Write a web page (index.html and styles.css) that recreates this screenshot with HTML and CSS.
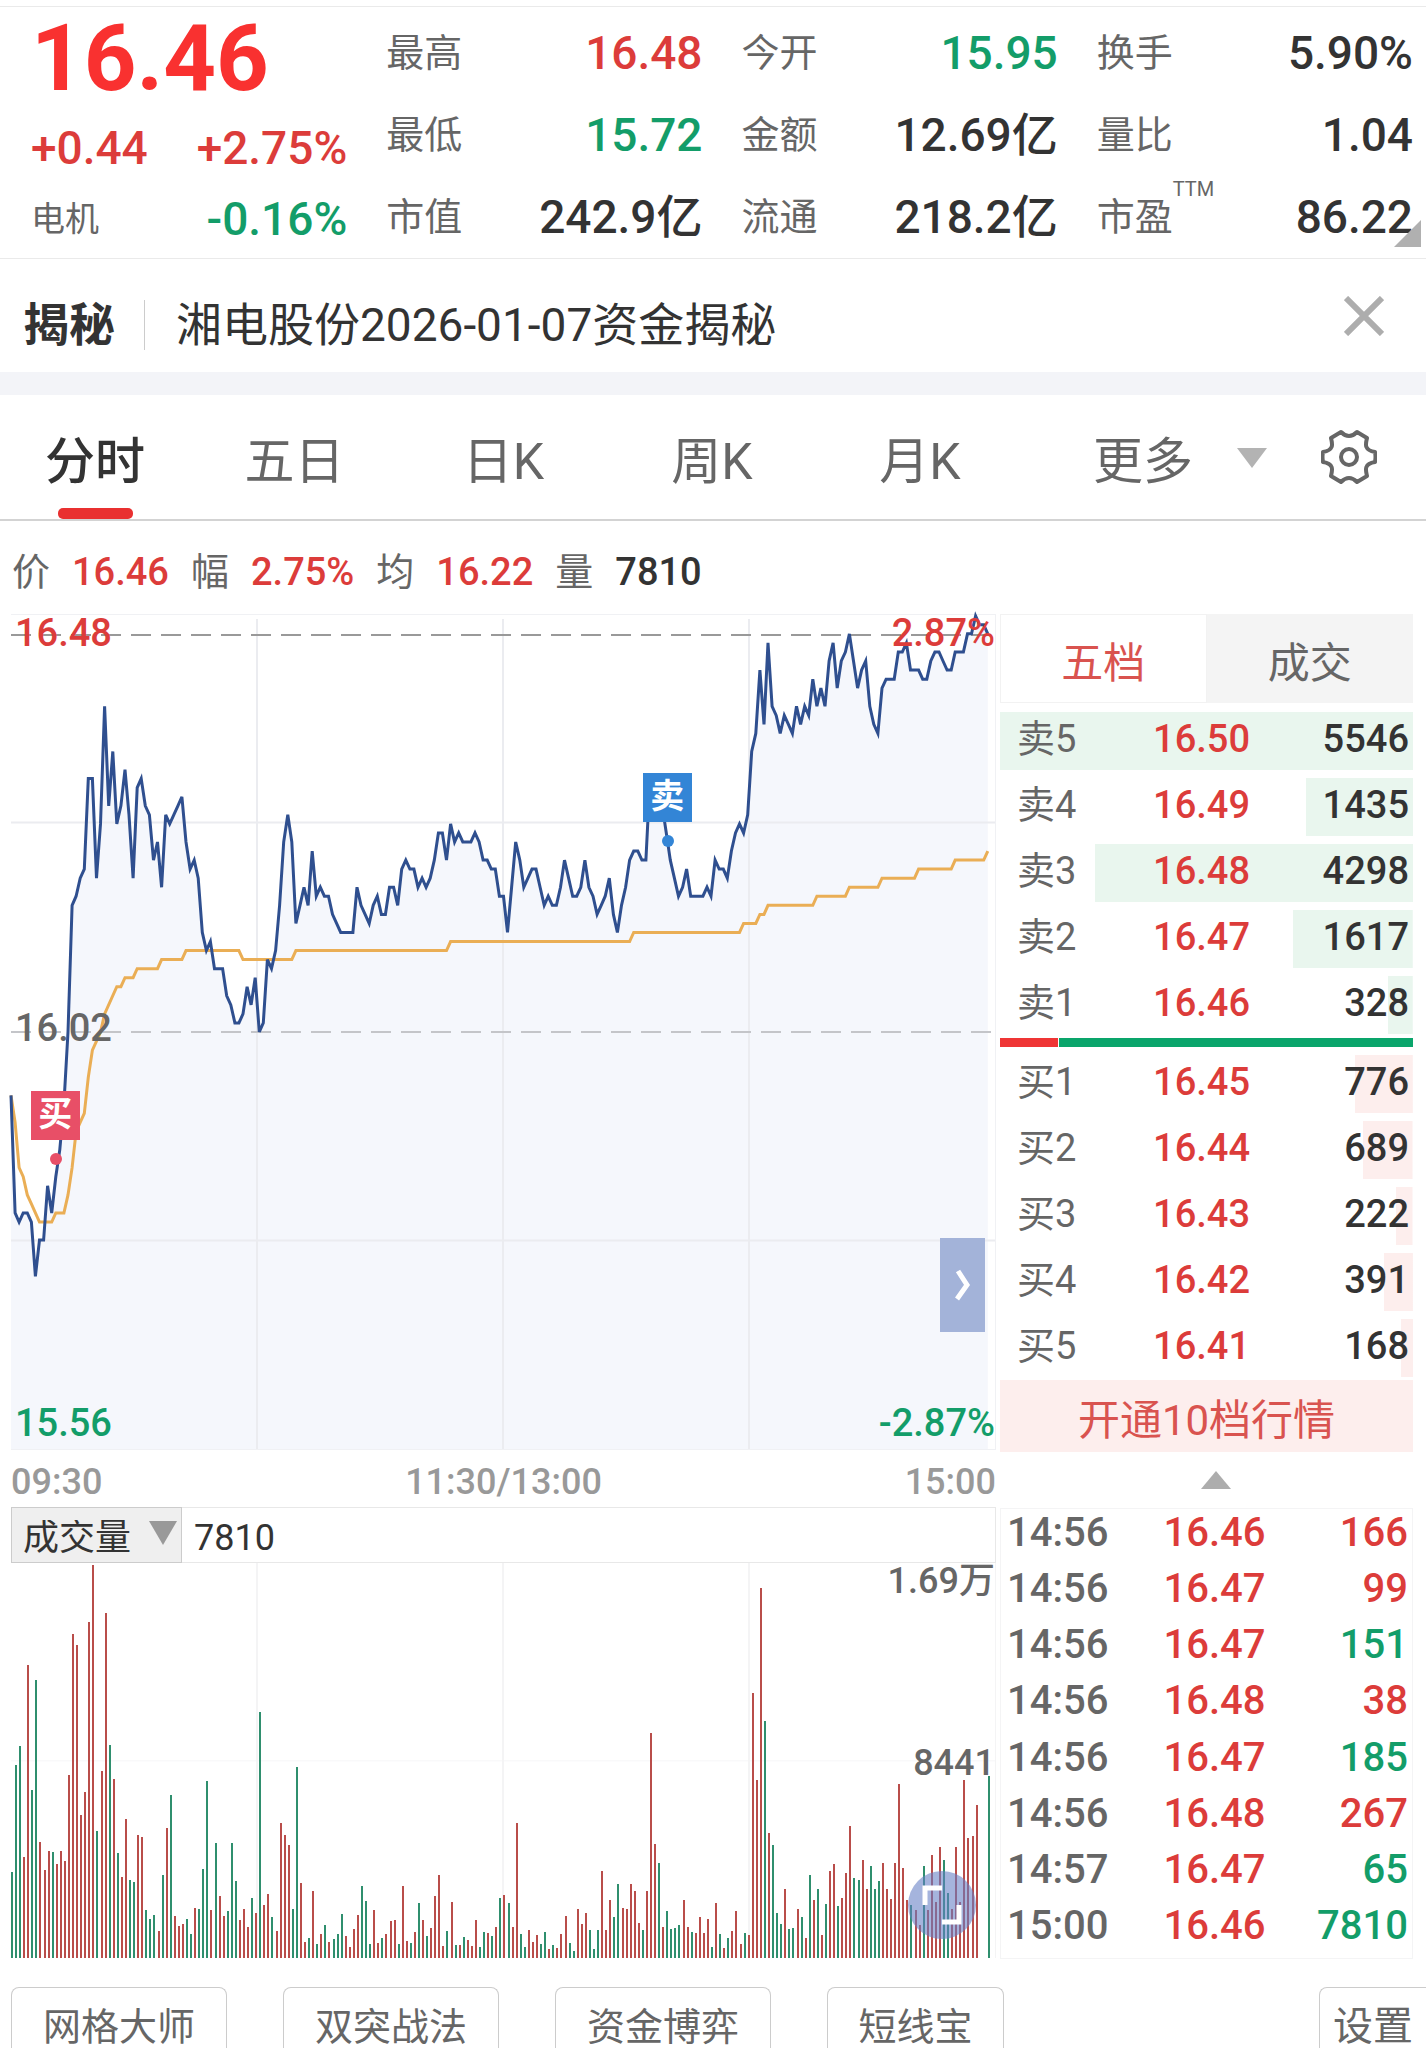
FILE: index.html
```html
<!DOCTYPE html>
<html lang="zh-CN">
<head>
<meta charset="utf-8">
<meta name="viewport" content="width=device-width, initial-scale=1">
<title>湘电股份 分时</title>
<link rel="stylesheet" href="styles.css">
</head>
<body>
<header class="quote">
  <div class="quote-main">
    <div class="price up">16.46</div>
    <div class="change up"><span>+0.44</span><span>+2.75%</span></div>
    <div class="sector"><span class="sector-name">电机</span><span class="down">-0.16%</span></div>
  </div>
  <dl class="stats">
    <div><dt>最高</dt><dd class="up">16.48</dd></div>
    <div><dt>最低</dt><dd class="down">15.72</dd></div>
    <div><dt>市值</dt><dd>242.9亿</dd></div>
  </dl>
  <dl class="stats">
    <div><dt>今开</dt><dd class="down">15.95</dd></div>
    <div><dt>金额</dt><dd>12.69亿</dd></div>
    <div><dt>流通</dt><dd>218.2亿</dd></div>
  </dl>
  <dl class="stats">
    <div><dt>换手</dt><dd>5.90%</dd></div>
    <div><dt>量比</dt><dd>1.04</dd></div>
    <div><dt>市盈<sup>TTM</sup></dt><dd>86.22</dd></div>
  </dl>
  <span class="corner"></span>
</header>

<section class="news">
  <strong class="news-tag">揭秘</strong>
  <a class="news-link" href="#news">湘电股份2026-01-07资金揭秘</a>
  <button class="close" type="button" aria-label="关闭">
    <svg width="40" height="40" viewBox="0 0 40 40"><path d="M2 2L38 38M38 2L2 38" stroke="#adadad" stroke-width="6" fill="none"/></svg>
  </button>
</section>

<nav class="tabs">
  <button class="tab active" type="button">分时</button>
  <button class="tab" type="button">五日</button>
  <button class="tab" type="button">日K</button>
  <button class="tab" type="button">周K</button>
  <button class="tab" type="button">月K</button>
  <button class="tab more" type="button" aria-haspopup="true">更多
    <svg width="30" height="20" viewBox="0 0 30 20"><path d="M0 0H30L15 20Z" fill="#b3b3b3"/></svg>
  </button>
  <button class="tab gear" type="button" aria-label="图表设置">
    <svg width="56" height="56" viewBox="0 0 56 56" fill="none" stroke="#666" stroke-width="4" stroke-linejoin="round"><path d="M20 3Q28 11 36 3L46 9C45 14 42 21 54 23Q55 28 54 33C42 35 45 42 46 47L36 53Q28 45 20 53L10 47C11 42 14 35 2 33Q1 28 2 23C14 21 11 14 10 9Z"/><circle cx="28" cy="28" r="8"/></svg>
  </button>
</nav>

<div class="readout">
  <span>价</span><b class="up">16.46</b>
  <span>幅</span><b class="up">2.75%</b>
  <span>均</span><b class="up">16.22</b>
  <span>量</span><b>7810</b>
</div>

<main class="board">
  <section class="charts">
    <div class="chart">
      <svg id="price" viewBox="0 0 984 836" preserveAspectRatio="none">
        <path id="area" fill="#f5f7fc"/>
        <path d="M0 208H984M0 627H984M246 4V836M492 4V836M738 4V836" stroke="#ebecf0" stroke-width="2"/>
        <path d="M0 20H984" stroke="#999" stroke-width="2" stroke-dasharray="20 10"/>
        <path d="M0 418H984" stroke="#c4c5c9" stroke-width="2" stroke-dasharray="20 10"/>
        <path id="avg" fill="none" stroke="#eaae55" stroke-width="3"/>
        <path id="line" fill="none" stroke="#2f4f8f" stroke-width="3"/>
      </svg>
      <span class="mark top left up">16.48</span>
      <span class="mark top right up">2.87%</span>
      <span class="mark mid left">16.02</span>
      <span class="mark bottom left down">15.56</span>
      <span class="mark bottom right down">-2.87%</span>
      <span class="pin buy">买</span>
      <span class="pin sell">卖</span>
      <button class="expand" type="button" aria-label="展开">
        <svg width="16" height="32" viewBox="0 0 16 32"><path d="M3 2L12 16L2 30" fill="none" stroke="#fff" stroke-width="5"/></svg>
      </button>
    </div>
    <div class="times"><span>09:30</span><span>11:30/13:00</span><span>15:00</span></div>
    <div class="vol-head">
      <div class="picker">
        <select aria-label="指标"><option>成交量</option></select>
        <svg width="28" height="24" viewBox="0 0 28 24"><path d="M0 0H28L14 24Z" fill="#999"/></svg>
      </div>
      <span>7810</span>
    </div>
    <div class="volume">
      <svg id="volume" viewBox="0 394 984 956" preserveAspectRatio="none">
        <path d="M0 873H984M246 394V1350M492 394V1350M738 394V1350" stroke="#f4f4f5" stroke-width="2"/>
        <path id="rise" fill="#b94d4a" shape-rendering="crispEdges"/>
        <path id="fall" fill="#2f8f6e" shape-rendering="crispEdges"/>
      </svg>
      <span class="scale full">1.69万</span>
      <span class="scale half">8441</span>
      <button class="fullscreen" type="button" aria-label="全屏">
        <svg width="40" height="40" viewBox="0 0 40 40" fill="none" stroke="#fff" stroke-width="5"><path d="M3 20V3H20M37 20V37H20"/></svg>
      </button>
    </div>
  </section>

  <aside class="side">
    <div class="side-tabs">
      <button class="active" type="button">五档</button>
      <button type="button">成交</button>
    </div>
    <table class="depth ask">
      <tr style="--w:100%"><th>卖5</th><td>16.50</td><td>5546</td></tr>
      <tr style="--w:26%"><th>卖4</th><td>16.49</td><td>1435</td></tr>
      <tr style="--w:77%"><th>卖3</th><td>16.48</td><td>4298</td></tr>
      <tr style="--w:29%"><th>卖2</th><td>16.47</td><td>1617</td></tr>
      <tr style="--w:6%"><th>卖1</th><td>16.46</td><td>328</td></tr>
    </table>
    <div class="ratio"><i style="width:14.3%"></i></div>
    <table class="depth bid">
      <tr style="--w:14%"><th>买1</th><td>16.45</td><td>776</td></tr>
      <tr style="--w:12%"><th>买2</th><td>16.44</td><td>689</td></tr>
      <tr style="--w:4%"><th>买3</th><td>16.43</td><td>222</td></tr>
      <tr style="--w:7%"><th>买4</th><td>16.42</td><td>391</td></tr>
      <tr style="--w:3%"><th>买5</th><td>16.41</td><td>168</td></tr>
    </table>
    <button class="upgrade" type="button">开通10档行情</button>
    <button class="fold" type="button" aria-label="收起">
      <svg width="30" height="18" viewBox="0 0 30 18"><path d="M0 18H30L15 0Z" fill="#adadad"/></svg>
    </button>
    <table class="trades">
      <tr><th>14:56</th><td>16.46</td><td class="up">166</td></tr>
      <tr><th>14:56</th><td>16.47</td><td class="up">99</td></tr>
      <tr><th>14:56</th><td>16.47</td><td class="down">151</td></tr>
      <tr><th>14:56</th><td>16.48</td><td class="up">38</td></tr>
      <tr><th>14:56</th><td>16.47</td><td class="down">185</td></tr>
      <tr><th>14:56</th><td>16.48</td><td class="up">267</td></tr>
      <tr><th>14:57</th><td>16.47</td><td class="down">65</td></tr>
      <tr><th>15:00</th><td>16.46</td><td class="down">7810</td></tr>
    </table>
  </aside>
</main>

<footer class="tools">
  <button type="button">网格大师</button>
  <button type="button">双突战法</button>
  <button type="button">资金博弈</button>
  <button class="short" type="button">短线宝</button>
  <button class="settings" type="button">设置</button>
</footer>
<script src="chart.js"></script>
</body>
</html>
```
FILE: styles.css
```css
:root {
  --up: #dc3c3a;
  --down: #139d69;
  --ink: #333;
  --mute: #666;
  --num: Roboto, "Noto Sans CJK SC", sans-serif;
}
* { box-sizing: border-box; }
body {
  margin: 0;
  background: #fff;
  color: var(--ink);
  font-family: var(--num);
  font-size: 38px;
  line-height: 1;
}
button, select {
  margin: 0;
  padding: 0;
  border: 0;
  background: none;
  color: inherit;
  font: inherit;
}
svg { display: block; }
.up { color: var(--up); }
.down { color: var(--down); }

.quote {
  position: relative;
  display: grid;
  grid-template-columns: repeat(4, minmax(0, 1fr));
  gap: 39px;
  margin-top: 6px;
  padding: 5px 13px 0 31px;
  border-top: 1px solid #eaeaea;
  border-bottom: 1px solid #eaeaea;
  font-size: 46px;
  font-weight: 500;
}
.price {
  font-size: 92px;
  font-weight: 700;
  line-height: 94px;
  color: #f93130;
}
.change, .sector {
  display: flex;
  justify-content: space-between;
  align-items: center;
}
.change { height: 84px; }
.sector { height: 58px; }
.sector-name {
  font-size: 34px;
  font-weight: 400;
  color: var(--mute);
}
.stats { margin: 0; }
.stats div {
  display: flex;
  justify-content: space-between;
  align-items: center;
  height: 82px;
}
.stats dt {
  position: relative;
  font-size: 38px;
  font-weight: 400;
  color: var(--mute);
}
.stats dd { margin: 0; white-space: nowrap; }
.stats sup {
  position: absolute;
  left: 100%;
  top: -20px;
  font-size: 20px;
  line-height: 22px;
}
.corner {
  position: absolute;
  right: 5px;
  bottom: 11px;
  border-left: 27px solid transparent;
  border-bottom: 27px solid #b0b0b0;
}

.news {
  display: flex;
  align-items: center;
  height: 136px;
  padding: 18px 42px 0 23px;
  border-bottom: 23px solid #f3f4f8;
  font-size: 46px;
}
.news-tag { font-weight: 700; }
.news-link {
  flex: 1;
  margin-left: 29px;
  padding-left: 31px;
  border-left: 1px solid #ccc;
  color: inherit;
  text-decoration: none;
  line-height: 50px;
}
.close { margin-bottom: 18px; }

.tabs {
  display: grid;
  grid-template-columns: 190fr 209fr 209fr 208fr 208fr 276fr 126fr;
  height: 126px;
  border-bottom: 2px solid #d3d3d3;
}
.tab {
  position: relative;
  display: flex;
  justify-content: center;
  align-items: center;
  padding-top: 10px;
  font-size: 50px;
  color: var(--mute);
}
.tab.active { font-weight: 500; color: var(--ink); }
.tab.active::after {
  content: "";
  position: absolute;
  bottom: 0;
  width: 75px;
  height: 11px;
  border-radius: 5px;
  background: #e93030;
}
.tab.more { gap: 44px; padding-left: 36px; }
.tab.more svg { margin-bottom: 8px; }
.tab.gear { padding: 0 28px 0 0; }

.readout {
  display: flex;
  align-items: center;
  gap: 22px;
  height: 93px;
  padding: 8px 12px 0;
}
.readout span { color: var(--mute); }
.readout b { font-weight: 500; }

.board {
  display: grid;
  grid-template-columns: minmax(0, 1fr) 413px;
  gap: 4px;
  padding: 0 13px 0 11px;
}
.chart {
  position: relative;
  height: 836px;
  border: solid #f0f1f4;
  border-width: 1px 1px 1px 0;
}
.chart > svg, .volume > svg {
  width: 100%;
  height: 100%;
  overflow: visible;
}
.mark {
  position: absolute;
  font-weight: 500;
  line-height: 40px;
}
.mark.mid { top: 393px; color: var(--mute); }
.mark.top { top: -2px; }
.mark.bottom { bottom: 6px; }
.mark.left { left: 4px; }
.mark.right { right: 0; }
.pin {
  position: absolute;
  width: 49px;
  height: 49px;
  font-size: 34px;
  font-weight: 700;
  line-height: 47px;
  text-align: center;
  color: #fff;
}
.pin::after {
  content: "";
  position: absolute;
  left: 19px;
  top: 62px;
  width: 12px;
  height: 12px;
  border-radius: 50%;
  background: inherit;
}
.buy { left: 2%; top: 476px; background: #e84f67; }
.sell { left: 64.2%; top: 158px; background: #3385d6; }
.expand {
  position: absolute;
  right: 10px;
  bottom: 117px;
  display: grid;
  place-items: center;
  width: 45px;
  height: 94px;
  background: #a3b3d9;
}
.times {
  display: flex;
  justify-content: space-between;
  align-items: center;
  height: 57px;
  padding-top: 6px;
  font-size: 36px;
  font-weight: 500;
  color: #999;
}
.vol-head {
  display: flex;
  align-items: center;
  gap: 12px;
  height: 56px;
  padding-top: 6px;
  border: 1px solid #e8e8e8;
  border-left: 0;
  font-size: 36px;
}
.picker { position: relative; height: 56px; margin-top: -6px; }
.picker select {
  width: 171px;
  height: 56px;
  padding: 6px 0 0 11px;
  appearance: none;
  border: 1px solid #ccc;
  background: #efefef;
}
.picker svg {
  position: absolute;
  right: 5px;
  top: 14px;
  pointer-events: none;
}
.volume {
  position: relative;
  height: 395px;
  border-right: 1px solid #f4f4f5;
}
.scale {
  position: absolute;
  right: 0;
  font-size: 36px;
  font-weight: 500;
  line-height: 40px;
  color: var(--mute);
}
.scale.full { top: -2px; }
.scale.half { top: 180px; }
.fullscreen {
  position: absolute;
  right: 19px;
  bottom: 19px;
  display: grid;
  place-items: center;
  width: 68px;
  height: 68px;
  border-radius: 50%;
  background: rgba(100, 126, 196, .58);
}

.side-tabs {
  display: grid;
  grid-template-columns: 1fr 1fr;
  height: 89px;
  margin-bottom: 1px;
  font-size: 42px;
  color: var(--mute);
}
.side-tabs button { padding-top: 10px; background: #f4f4f4; }
.side-tabs .active {
  border: 1px solid #f2f2f2;
  background: #fff;
  color: #d9534f;
}
table {
  width: 100%;
  border-collapse: collapse;
  table-layout: fixed;
}
th, td { padding: 0; font-weight: 500; text-align: right; }
th { text-align: left; }
td:nth-child(2) { color: var(--up); }
.depth tr {
  height: 66px;
  background: linear-gradient(var(--fill), var(--fill)) right bottom / var(--w) 58px no-repeat;
}
.ask { --fill: #e9f6ee; }
.bid { --fill: #fdeeed; }
.depth th, .depth td { padding-top: 3px; }
.depth th {
  width: 110px;
  padding-left: 17px;
  font-weight: 400;
  color: var(--mute);
}
.depth td:nth-child(2) { width: 140px; }
.depth td:last-child { padding-right: 4px; }
.ratio {
  height: 9px;
  margin-top: 4px;
  background: #0aa56b;
}
.ratio i {
  display: block;
  height: 9px;
  border-right: 1px solid #fff;
  background: #ef3535;
}
.upgrade {
  display: block;
  width: 100%;
  height: 72px;
  margin-top: 3px;
  padding-top: 10px;
  background: #fdeeed;
  color: #d9534f;
  font-size: 42px;
}
.fold {
  display: grid;
  place-items: center;
  width: 100%;
  height: 56px;
  padding-left: 19px;
}
.trades {
  height: 451px;
  border: 1px solid #f4f4f5;
  font-size: 40px;
}
.trades th, .trades td { padding-bottom: 8px; }
.trades th { width: 120px; padding-left: 6px; color: var(--mute); }
.trades td:nth-child(2) { width: 145px; }
.trades td:last-child { padding-right: 4px; }

.tools {
  display: flex;
  gap: 56px;
  padding: 28px 0 0 11px;
}
.tools button {
  flex: none;
  width: 216px;
  height: 62px;
  padding-top: 16px;
  border: 1px solid #ccc;
  border-bottom: 0;
  border-radius: 8px 8px 0 0;
  color: var(--mute);
}
.tools .short { width: 177px; }
.tools .settings {
  width: 107px;
  margin-left: auto;
  border-right: 0;
  border-radius: 8px 0 0 0;
  font-size: 40px;
}
```
FILE: chart.js
```js
// One entry per minute: distance from yesterday's close, in cents.
const prices = [
  -7, -20, -21, -20, -20, -21, -27, -23, -23, -17, -20, -16, -13, -8, 0, 14, 15, 17, 18, 28,
  28, 17, 23, 36, 25, 31, 23, 25, 29, 24, 17, 27, 28, 25, 24, 19, 21, 16, 24, 23,
  24, 25, 26, 21, 18, 19, 17, 11, 9, 10, 7, 7, 7, 4, 3, 1, 1, 2, 5, 3,
  6, 0, 1, 8, 7, 9, 14, 21, 24, 21, 12, 14, 16, 14, 20, 15, 16, 15, 15, 13,
  12, 11, 11, 11, 11, 16, 14, 13, 12, 14, 15, 13, 13, 16, 16, 14, 18, 19, 18, 18,
  16, 17, 16, 17, 19, 22, 22, 19, 23, 21, 22, 21, 21, 21, 22, 21, 19, 19, 18, 18,
  15, 15, 11, 16, 21, 19, 16, 17, 18, 18, 16, 14, 15, 14, 14, 16, 19, 17, 15, 15,
  16, 19, 16, 15, 13, 14, 15, 17, 13, 11, 14, 16, 19, 20, 20, 19, 19, 28, 27, 26,
  25, 22, 19, 17, 15, 16, 18, 15, 15, 15, 15, 16, 15, 19, 18, 18, 17, 20, 22, 23,
  22, 24, 31, 33, 40, 34, 43, 36, 35, 33, 35, 34, 33, 36, 34, 36, 35, 39, 36, 38,
  36, 41, 43, 38, 41, 42, 44, 41, 38, 40, 41, 36, 34, 33, 38, 39, 39, 39, 42, 42,
  43, 40, 40, 40, 39, 39, 41, 42, 42, 41, 40, 40, 42, 42, 42, 44, 44, 46, 45, 45, 44
];

// Average price: [minute, cents] at each corner of the stepped line.
const average = [
  [0, -7], [1, -10], [2, -15], [3, -16], [4, -18], [5, -19], [6, -20], [7, -21], [10, -21],
  [11, -20], [13, -20], [14, -18], [15, -15], [16, -11], [17, -10], [18, -9], [19, -5], [20, -2],
  [21, -1], [22, 0], [23, 2], [26, 5], [27, 5], [28, 6], [30, 6], [31, 7], [36, 7], [37, 8],
  [42, 8], [43, 9], [56, 9], [57, 8], [69, 8], [70, 9], [107, 9], [108, 10], [152, 10],
  [153, 11], [179, 11], [180, 12], [183, 12], [184, 13], [185, 13], [186, 14], [197, 14],
  [198, 15], [205, 15], [206, 16], [213, 16], [214, 17], [222, 17], [223, 18], [231, 18],
  [232, 19], [239, 19], [240, 20]
];

// Top of each volume bar over a baseline of 1350; negative marks a falling minute.
const bars = [
  -1142, -883, -837, 1106, 641, -944, -678, 1070, 1137, 1091, -1094, 1123, 1091, 1116, 907, 566, 593, 1004, 949, 537,
  399, -1043, 898, 515, -835, 917, -1096, 1154, 1014, -1161, -1166, 1053, 1057, -1234, -1256, -1246, 1285, -1149, 1036, -956,
  1249, 1273, 1268, -1256, -1292, 1229, -1232, -1135, -922, 1234, -1072, 1200, 1249, -1236, -1072, -1164, 1258, 1232, 1275, -1205,
  1241, -755, 1222, 1195, -1251, 1285, 1024, 1053, 1077, -1232, -888, 1169, 1312, -1302, 1188, -1316, 1292, -1270, 1312, -1304,
  -1292, -1244, 1297, 1324, 1280, 1246, -1176, -1212, -1316, 1234, 1314, -1302, 1292, 1261, 1258, -1316, 1176, 1309, -1314, 1287,
  -1217, 1258, -1297, 1278, 1200, 1149, 1321, -1285, 1215, -1319, 1319, -1299, 1307, 1321, 1258, -1324, -1287, 1290, -1297, 1275,
  -1205, 1198, -1217, 1275, 1024, -1292, -1324, 1282, 1312, 1295, -1316, -1287, 1328, -1319, 1326, 1292, 1249, -1314, -1333, 1232,
  1268, 1241, -1282, -1328, -1282, 1140, 1282, 1210, -1251, -1171, 1229, 1232, 1171, 1188, 1266, -1282, 1188, 806, 1074, -1120,
  1275, -1236, -1280, -1278, -1270, 1210, 1275, -1287, 1290, 1251, 1290, 1256, -1324, 1217, -1292, 1326, -1302, 1285, 1236, 1316,
  -1290, 1295, 709, 920, 455, -777, 1048, -1077, -1241, -1268, 1183, -1280, -1278, 1232, -1251, 1302, -1149, 1210, -1183, 1295,
  -1220, 1140, 1123, -1224, 1205, 1145, 1031, -1157, -1161, 1113, 1183, -1128, -1183, -1164, 1120, 1183, 1207, 1120, 929, 1132,
  1210, -1222, 1234, 1270, -1128, 1234, 1101, 1215, 1082, -1113, -1193, 1232, 1082, 1215, 920, 1060, 1055, 980, 1350, 1350, -910
];

const STEP = 4.07;
const trace = points => "M" + points.map(([m, c]) => (m * STEP).toFixed(1) + " " + (418 - c * 9.07).toFixed(1)).join("L");
const line = trace(prices.map((c, m) => [m, c]));
document.getElementById("line").setAttribute("d", line);
document.getElementById("area").setAttribute("d", line + "V836H0Z");
document.getElementById("avg").setAttribute("d", trace(average));

const barPath = falling => bars.map((v, m) =>
  (v < 0) === falling ? `M${Math.round(m * STEP)} 1350V${Math.abs(v)}h2V1350Z` : "").join("");
document.getElementById("rise").setAttribute("d", barPath(false));
document.getElementById("fall").setAttribute("d", barPath(true));
```
